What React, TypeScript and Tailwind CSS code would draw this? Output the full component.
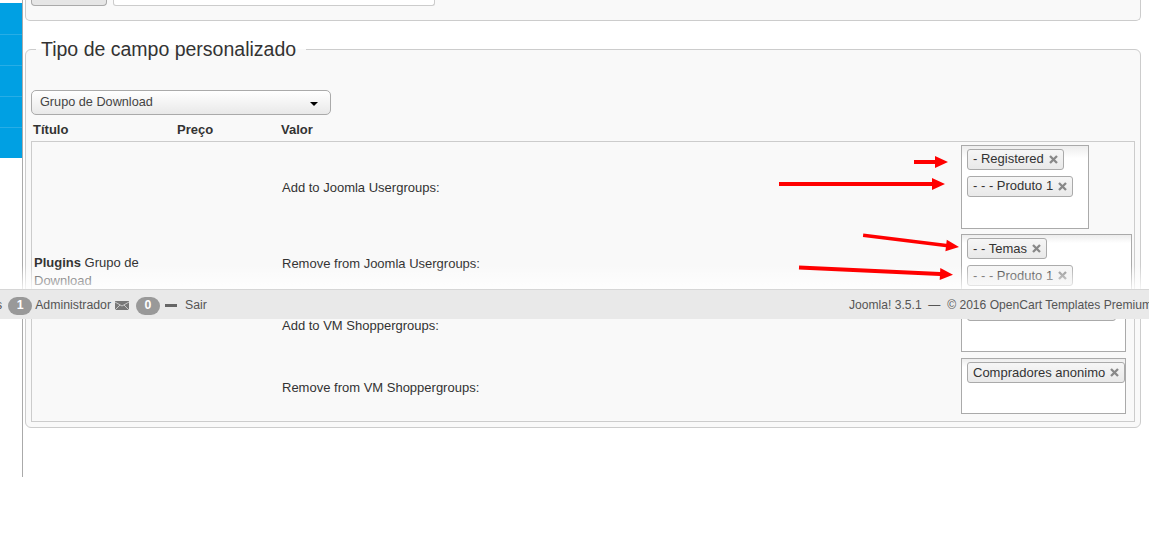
import React from 'react';

const sideItems = [0, 1, 2, 3, 4];

const Tag: React.FC<{ label: string }> = ({ label }) => (
  <span className="flex h-[21px] w-fit items-center rounded-[3px] border border-[#aaa] bg-gradient-to-b from-[#f6f6f6] to-[#e9e9e9] px-[5px] text-[13px] whitespace-nowrap text-[#333]">
    {label}
    <svg width="9" height="9" viewBox="0 0 9 9" className="ml-[5px]">
      <path d="M1 1l7 7M8 1l-7 7" stroke="#888" strokeWidth="2.300" />
    </svg>
  </span>
);

const Choices: React.FC<{ tags: string[]; width: string; height: string }> = ({ tags, width, height }) => (
  <div className={`${width} ${height} flex flex-col gap-[6px] overflow-hidden border border-[#aaa] bg-gradient-to-b from-[#eee] from-[1%] to-white to-[15%] pl-[5px] pt-[3px]`}>
    {tags.map((t) => (
      <Tag key={t} label={t} />
    ))}
  </div>
);

const Row: React.FC<{ label: string; children: React.ReactNode }> = ({ label, children }) => (
  <>
    <div className="col-start-3 flex items-center pl-px pt-[3px] text-[13px] text-[#333]">{label}</div>
    <div className="col-start-4 flex items-center">{children}</div>
  </>
);

export default function App() {
  return (
    <div className="relative flex h-[533px] w-[1149px] overflow-hidden bg-white font-['Liberation_Sans',Arial,sans-serif] text-[#333]">
      <aside className="h-[477px] w-[23px] shrink-0 border-r border-[#aaa] pt-[3px]">
        {sideItems.map((i) => (
          <div key={i} className="h-[31px] border-b border-[#27ade6] bg-[#00a0e3] first:h-[32px] last:h-[30px] last:border-b-0" />
        ))}
      </aside>

      <main className="flex-1 pl-[2px] pr-[8px]">
        {/* bloco de cima, cortado pelo scroll */}
        <div className="flex h-[21px] gap-[6px] rounded-b-[5px] border border-t-0 border-[#ccc] bg-[#f9f9f9] pl-[5px]">
          <div className="h-[6px] w-[76px] rounded-b-[4px] border border-t-0 border-[#aaa] bg-[#e6e6e6]" />
          <div className="h-[6px] w-[322px] rounded-b-[3px] border border-t-0 border-[#ccc] bg-white" />
        </div>

        <fieldset className="mt-[8px] rounded-[6px] border border-[#ccc] bg-[#f9f9f9] px-[5px] pb-[5px]">
          <legend className="ml-[5px] h-[40px] pl-[5px] pr-[10px] text-[19.500px] leading-[40px] text-[#333]">
            Tipo de campo personalizado
          </legend>

          <div className="mt-[21px] flex h-[25px] w-[300px] items-center justify-between rounded-[5px] border border-[#aaa] bg-gradient-to-b from-white to-[#e9e9e9] pl-[8px] pr-[12px] text-[12.700px] text-[#444]">
            Grupo de Download
            <span className="mt-[2px] h-0 w-0 border-x-[4px] border-t-[4px] border-x-transparent border-t-black" />
          </div>

          <div className="grid h-[26px] grid-cols-[144px_104px_1fr] items-center pl-[2px] pt-[4px] text-[13px] font-bold text-[#333]">
            <span>Título</span>
            <span>Preço</span>
            <span>Valor</span>
          </div>

          <div className="grid grid-cols-[145px_104px_680px_1fr] grid-rows-[89px_62px_62px_62px] border border-[#ccc] pb-[4px]">
            <div className="col-start-1 row-span-4 row-start-1 flex items-center pb-[15px] pl-[2px] text-[13px] leading-[18px]">
              <p>
                <b>Plugins</b> Grupo de Download
              </p>
            </div>
            <Row label="Add to Joomla Usergroups:">
              <Choices tags={['- Registered', '- - - Produto 1']} width="w-[128px]" height="h-[84px]" />
            </Row>
            <Row label="Remove from Joomla Usergroups:">
              <Choices tags={['- - Temas', '- - - Produto 1 ']} width="w-[171px]" height="h-[56px]" />
            </Row>
            <Row label="Add to VM Shoppergroups:">
              <Choices tags={['Compradores padrão']} width="w-[165px]" height="h-[56px]" />
            </Row>
            <Row label="Remove from VM Shoppergroups:">
              <Choices tags={['Compradores anonimo']} width="w-[165px]" height="h-[56px]" />
            </Row>
          </div>
        </fieldset>
      </main>

      {/* fade + rodape fixo por cima do conteudo */}
      <div className="absolute left-0 top-[265px] h-[30px] w-full bg-gradient-to-b from-white/0 to-white" />
      <footer className="absolute left-0 top-[289px] flex h-[30px] w-full items-center overflow-hidden border-t border-[#d6d6d6] bg-[#e9e9e9] pt-[2px] text-[12.300px] text-[#555]">
        <div className="-ml-[4px] flex w-[853px] shrink-0 items-center">
          <span>s</span>
          <span className="ml-[6px] flex h-[18px] w-[24px] items-center justify-center rounded-full bg-[#999] font-bold text-white">1</span>
          <span className="ml-[3px]">Administrador</span>
          <svg width="14" height="9" viewBox="0 0 14 9" className="ml-[4px]">
            <rect width="14" height="9" fill="#777" />
            <path d="M0 1l7 4 7-4M0 9l5-5M14 9l-5-5" stroke="#ddd" strokeWidth="0.800" fill="none" />
          </svg>
          <span className="ml-[7px] flex h-[18px] w-[24px] items-center justify-center rounded-full bg-[#999] font-bold text-white">0</span>
          <span className="ml-[5px] h-[3px] w-[12px] bg-[#666]" />
          <span className="ml-[8px]">Sair</span>
        </div>
        <div className="shrink-0 whitespace-nowrap text-[12.100px]">
          Joomla! 3.5.1 &nbsp;—&nbsp; © 2016 OpenCart Templates Premium
        </div>
      </footer>

      {/* setas vermelhas da anotacao */}
      <svg className="pointer-events-none absolute left-0 top-0" width="1149" height="533">
        <g fill="#f00">
          <path d="M914 160h21v-4l13 6-13 6v-4h-21z" />
          <path d="M779 182h153v-4l13 6-13 6v-4h-153z" />
          <path d="M863.300 233.500l83 10.300.5-4 12.200 7.200-13.600 4.200.5-4-83-10.300z" />
          <path d="M799.100 265.500l141 6.500.2-4 12.700 6.700-13.300 5.300.2-4-141-6.500z" />
        </g>
      </svg>
    </div>
  );
}
